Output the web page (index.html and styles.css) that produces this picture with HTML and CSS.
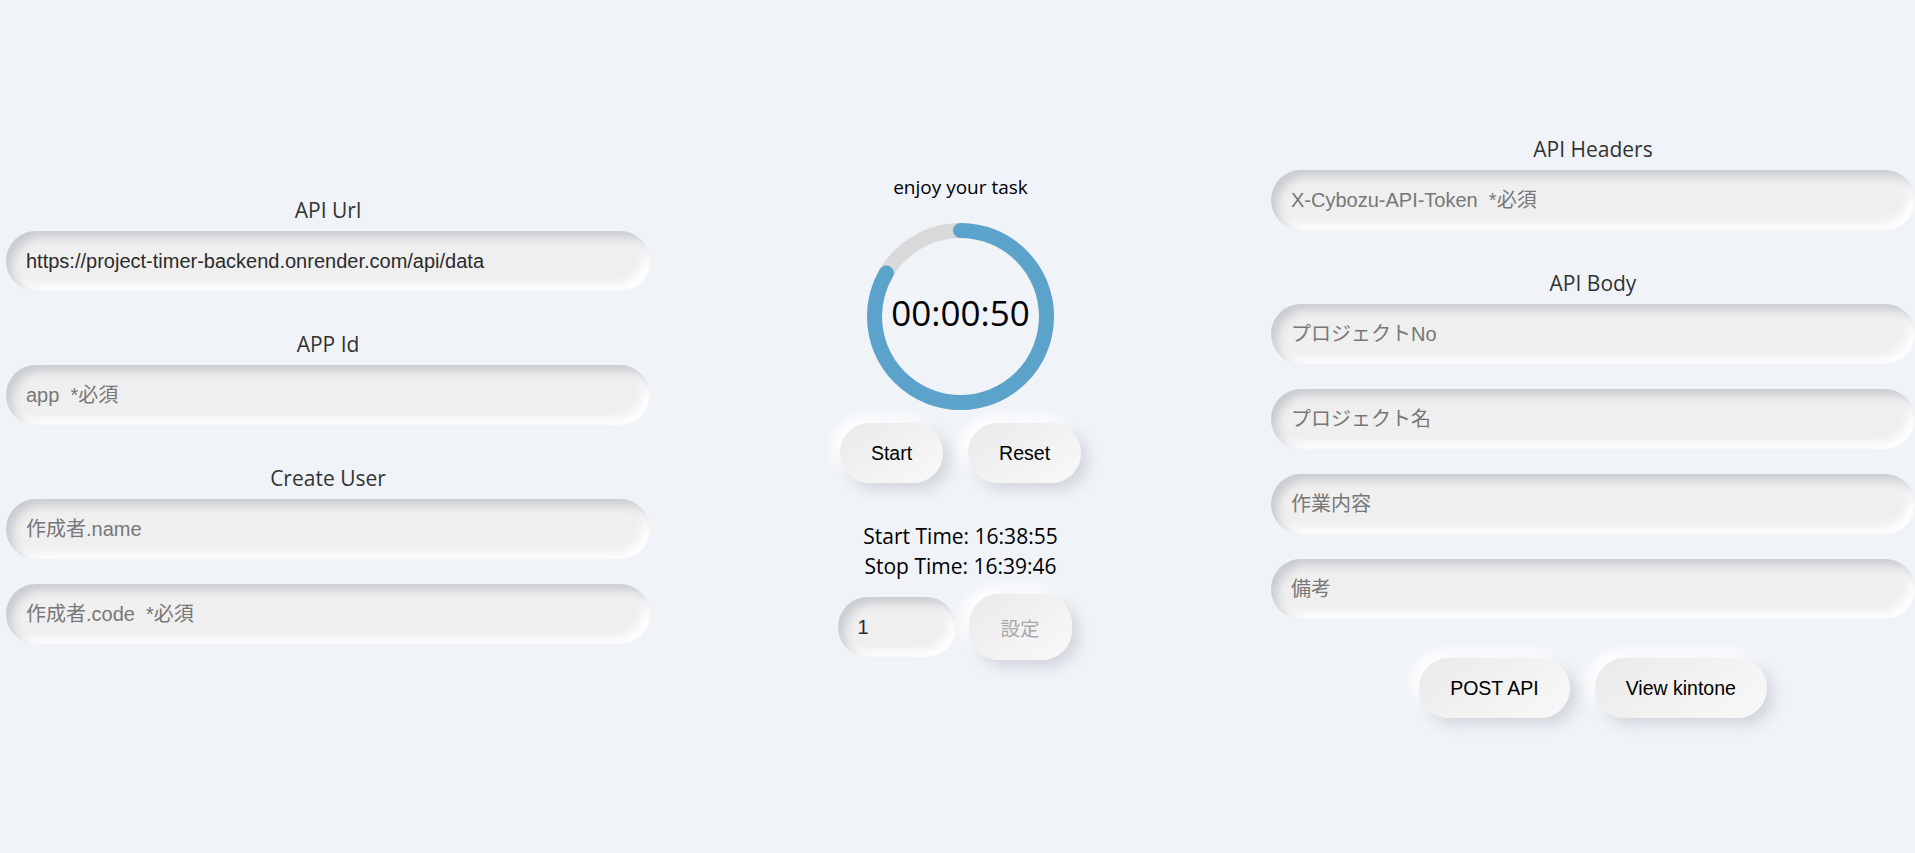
FILE: index.html
```html
<!DOCTYPE html>
<html lang="ja">
<head>
<meta charset="utf-8">
<title>Project Timer</title>
<link rel="stylesheet" href="styles.css">
</head>
<body>
<div class="app">
  <section class="col col-left">
    <div class="group">
      <div class="group-label">API Url</div>
      <input class="field" type="text" value="https://project-timer-backend.onrender.com/api/data">
    </div>
    <div class="group">
      <div class="group-label">APP Id</div>
      <input class="field" type="text" placeholder="app  *必須">
    </div>
    <div class="group">
      <div class="group-label">Create User</div>
      <div class="stack">
        <input class="field" type="text" placeholder="作成者.name">
        <input class="field" type="text" placeholder="作成者.code  *必須">
      </div>
    </div>
  </section>

  <section class="col col-mid">
    <div class="task-title">enjoy your task</div>
    <div class="timer">
      <svg class="ring" width="187" height="187" viewBox="0 0 187 187">
        <circle cx="93.5" cy="93.5" r="86" fill="none" stroke="#d9d9d9" stroke-width="15"/>
        <circle cx="93.5" cy="93.5" r="86" fill="none" stroke="#5ba3ca" stroke-width="15" stroke-linecap="round" stroke-dasharray="450.3 540.4" transform="rotate(-90 93.5 93.5)"/>
      </svg>
      <span class="timer-text">00:00:50</span>
    </div>
    <div class="btn-row">
      <button class="btn" type="button">Start</button>
      <button class="btn" type="button">Reset</button>
    </div>
    <div class="times">
      <div>Start Time: 16:38:55</div>
      <div>Stop Time: 16:39:46</div>
    </div>
    <div class="set-row">
      <input class="field num" type="text" value="1">
      <button class="btn btn-set" type="button" disabled>設定</button>
    </div>
  </section>

  <section class="col col-right">
    <div class="group">
      <div class="group-label">API Headers</div>
      <input class="field" type="text" placeholder="X-Cybozu-API-Token  *必須">
    </div>
    <div class="group">
      <div class="group-label">API Body</div>
      <div class="stack">
        <input class="field" type="text" placeholder="プロジェクトNo">
        <input class="field" type="text" placeholder="プロジェクト名">
        <input class="field" type="text" placeholder="作業内容">
        <input class="field" type="text" placeholder="備考">
      </div>
    </div>
    <div class="btn-row btn-row-api">
      <button class="btn" type="button">POST API</button>
      <button class="btn" type="button">View kintone</button>
    </div>
  </section>
</div>
</body>
</html>
```

FILE: styles.css
```css
html, body {
  margin: 0;
  padding: 0;
}

body {
  background: #f0f3f8;
  font-family: "Open Sans", "Noto Sans CJK JP", sans-serif;
  color: #000;
  overflow: hidden;
}

.app {
  display: grid;
  grid-template-columns: 644px 1fr 644px;
  padding-left: 6px;
  height: 853px;
  box-sizing: border-box;
  align-items: start;
}

.col {
  display: flex;
  flex-direction: column;
}

.col-left {
  padding-top: 198px;
}

.col-right {
  padding-top: 137px;
}

.col-mid {
  padding-top: 175px;
  align-items: center;
}

.group + .group {
  margin-top: 41px;
}

.group-label {
  font-family: "Open Sans", "Noto Sans CJK JP", sans-serif;
  font-size: 21px;
  line-height: 24px;
  color: #333;
  text-align: center;
  margin-bottom: 9px;
}

.stack {
  display: flex;
  flex-direction: column;
  gap: 25px;
}

.field {
  display: block;
  width: 100%;
  height: 60px;
  box-sizing: border-box;
  border: none;
  outline: none;
  border-radius: 30px;
  padding: 0 20px;
  background: #efefef;
  box-shadow: inset 6px 6px 10px #c9cbcf, inset -6px -6px 10px #ffffff;
  font-family: "Liberation Sans", "Noto Sans CJK JP", sans-serif;
  font-size: 20px;
  color: #2b2b2b;
}

.field::placeholder {
  color: #777;
}

.task-title {
  font-size: 19px;
  line-height: 24px;
  margin-bottom: 24px;
}

.timer {
  display: grid;
  place-items: center;
  width: 187px;
  height: 187px;
}

.ring,
.timer-text {
  grid-area: 1 / 1;
}

.timer-text {
  font-size: 35px;
  padding-bottom: 8px;
}

.btn-row {
  display: flex;
  justify-content: center;
  gap: 25px;
  margin-top: 13px;
}

.btn {
  height: 60px;
  padding: 0 31px;
  border: none;
  border-radius: 30px;
  background: linear-gradient(145deg, #eaeaea, #f9f9f9);
  box-shadow: 7px 7px 14px #d3d6dc, -7px -7px 14px #ffffff;
  font-family: "Liberation Sans", "Noto Sans CJK JP", sans-serif;
  font-size: 19.5px;
  color: #000;
  cursor: pointer;
}

.times {
  margin-top: 38px;
  font-size: 21px;
  line-height: 30px;
  text-align: center;
}

.set-row {
  display: flex;
  align-items: center;
  gap: 13px;
  margin-top: 13px;
  margin-right: 12px;
}

.field.num {
  width: 118px;
  padding-left: 20px;
}

.btn-set {
  height: 66px;
  width: 103px;
  padding: 0;
  color: #a8a8a8;
  cursor: default;
}

.btn-row-api {
  margin-top: 39px;
}
```
